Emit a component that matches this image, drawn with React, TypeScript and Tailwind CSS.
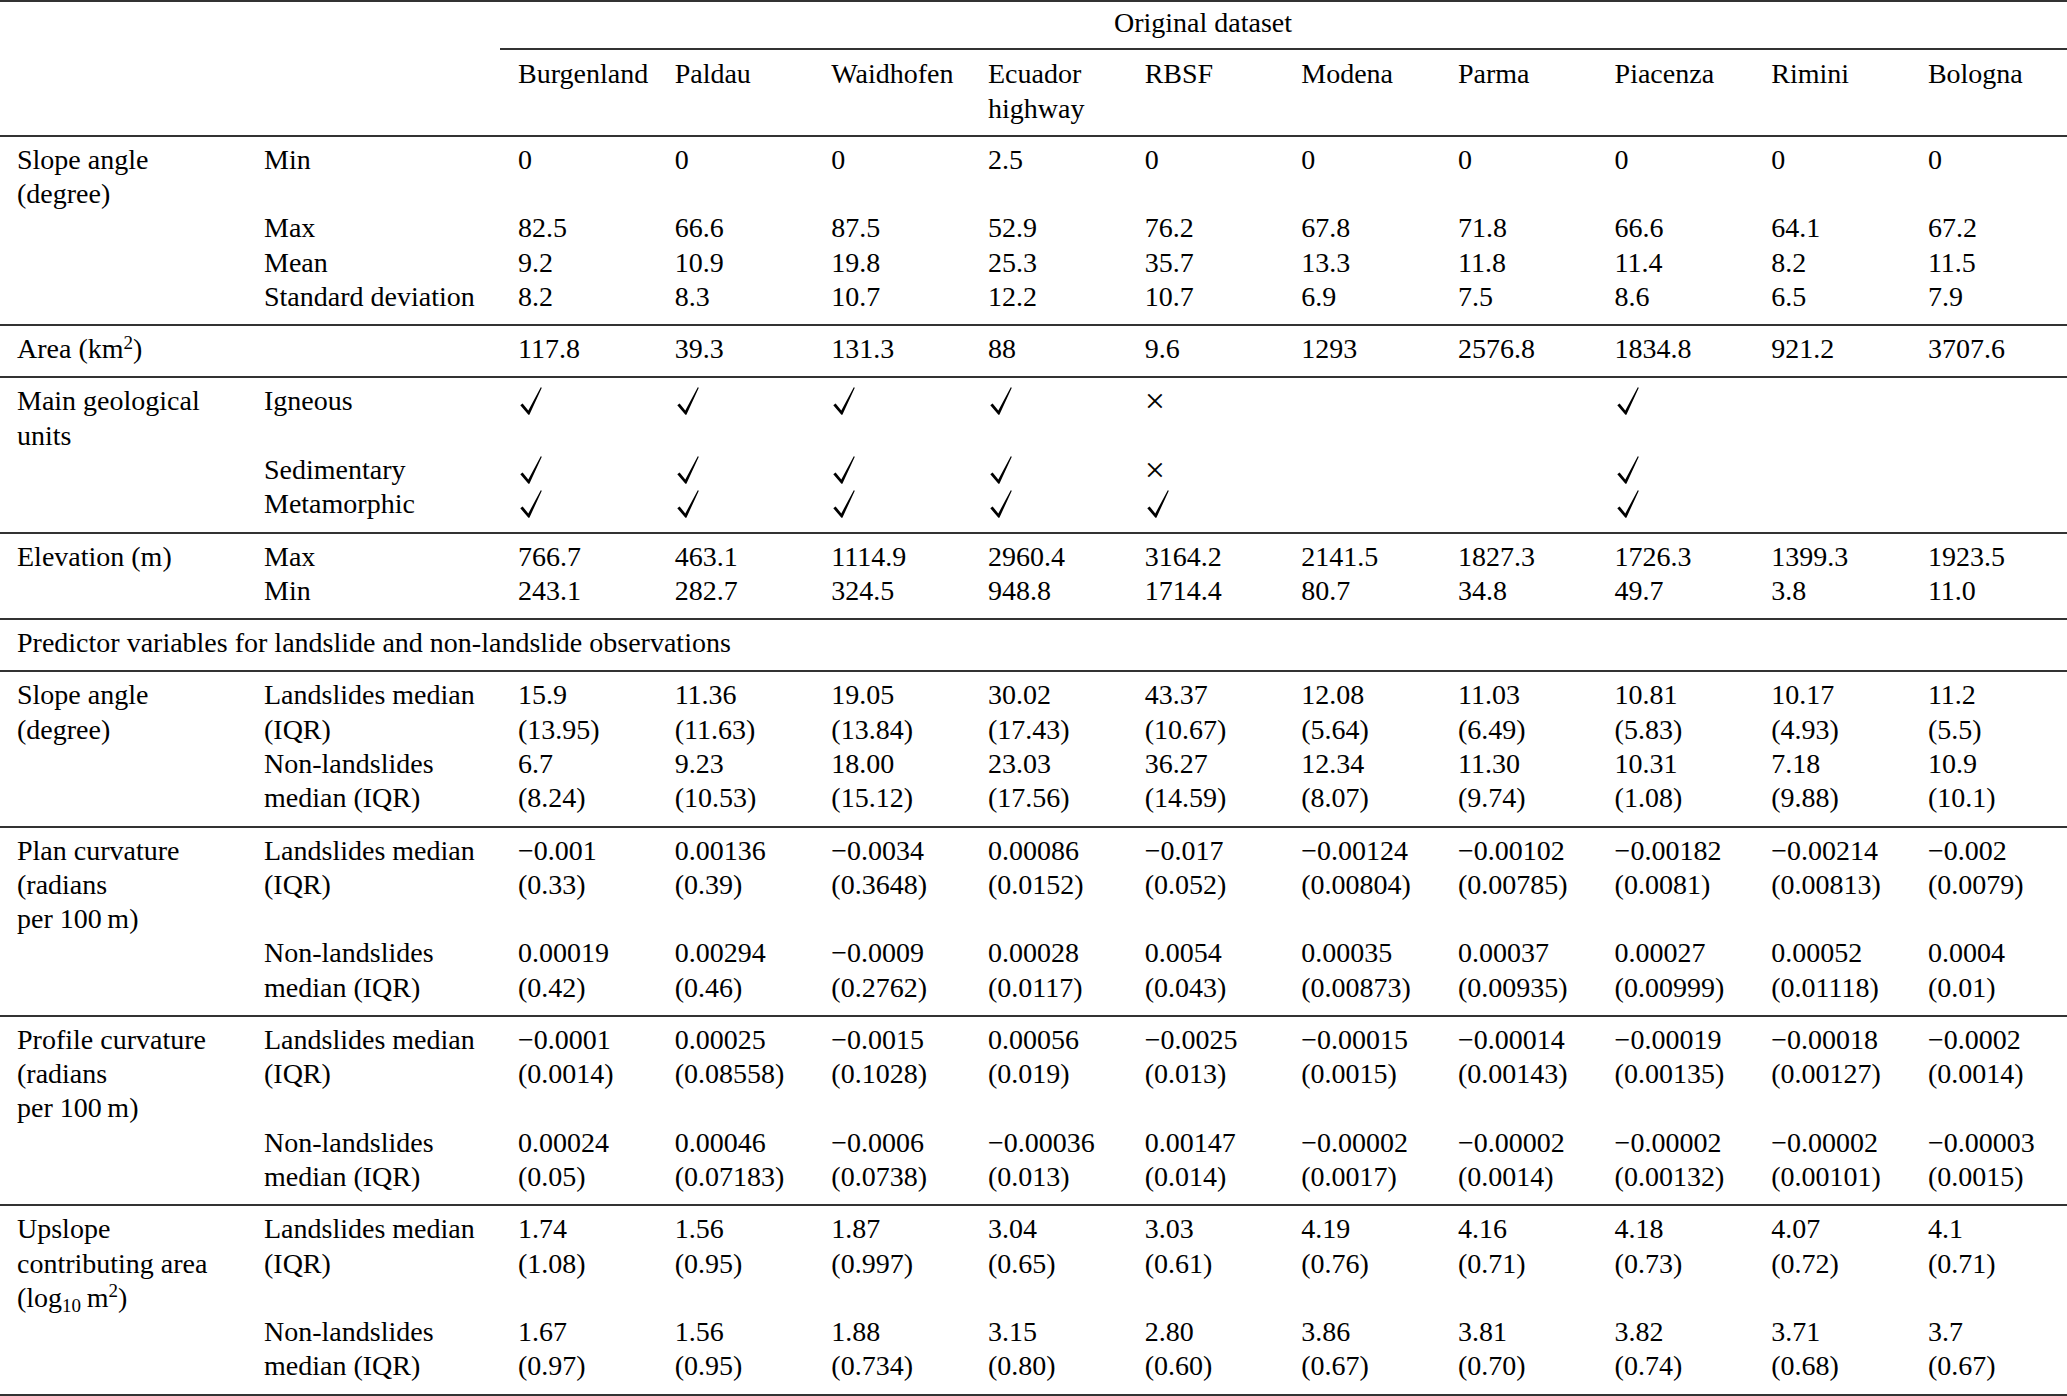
import type { ReactNode } from 'react'

//one grid for every row so the columns line up down the table
const grid = 'grid grid-cols-[247px_254px_repeat(9,156.67px)_1fr] pl-[17px] whitespace-pre-line'

const sites = ['Burgenland', 'Paldau', 'Waidhofen', 'Ecuador\nhighway', 'RBSF', 'Modena', 'Parma', 'Piacenza', 'Rimini', 'Bologna']

type RowData = { label?: ReactNode; sub?: ReactNode; vals: ReactNode[] }

//tex style check mark, short heavy hook then a long thin rise
function Check() {
  return (
    <svg width="22" height="28" viewBox="0 0 22 28" className="ml-[2px] mt-[3px] block" aria-label="√">
      <path d="M0.3 18.2 L2.6 16.4 L8.3 23.4 L20.8 0.2 L21.8 0.7 L9.4 27.8 L8.4 27.8 Z" fill="#000" />
    </svg>
  )
}

const Y = <Check />
const N = <div className="h-[34.25px] text-[36px] leading-[34.25px]">×</div>

type Block = { rows: RowData[] }

const top: Block[] = [
  {
    rows: [
      { label: 'Slope angle\n(degree)', sub: 'Min', vals: ['0', '0', '0', '2.5', '0', '0', '0', '0', '0', '0'] },
      { sub: 'Max', vals: ['82.5', '66.6', '87.5', '52.9', '76.2', '67.8', '71.8', '66.6', '64.1', '67.2'] },
      { sub: 'Mean', vals: ['9.2', '10.9', '19.8', '25.3', '35.7', '13.3', '11.8', '11.4', '8.2', '11.5'] },
      { sub: 'Standard deviation', vals: ['8.2', '8.3', '10.7', '12.2', '10.7', '6.9', '7.5', '8.6', '6.5', '7.9'] },
    ],
  },
  {
    rows: [
      {
        label: (
          <>
            Area (km<sup className="text-[19px]">2</sup>)
          </>
        ),
        vals: ['117.8', '39.3', '131.3', '88', '9.6', '1293', '2576.8', '1834.8', '921.2', '3707.6'],
      },
    ],
  },
  {
    rows: [
      { label: 'Main geological\nunits', sub: 'Igneous', vals: [Y, Y, Y, Y, N, '', '', Y, '', ''] },
      { sub: 'Sedimentary', vals: [Y, Y, Y, Y, N, '', '', Y, '', ''] },
      { sub: 'Metamorphic', vals: [Y, Y, Y, Y, Y, '', '', Y, '', ''] },
    ],
  },
  {
    rows: [
      { label: 'Elevation (m)', sub: 'Max', vals: ['766.7', '463.1', '1114.9', '2960.4', '3164.2', '2141.5', '1827.3', '1726.3', '1399.3', '1923.5'] },
      { sub: 'Min', vals: ['243.1', '282.7', '324.5', '948.8', '1714.4', '80.7', '34.8', '49.7', '3.8', '11.0'] },
    ],
  },
]

const ls = 'Landslides median\n(IQR)'
const nls = 'Non-landslides\nmedian (IQR)'

//pairs of median and IQR
function pairs(list: string) {
  return list.split(';').map((p) => {
    const [m, q] = p.trim().split(' ')
    return `${m}\n${q}`
  })
}

const bottom: Block[] = [
  {
    rows: [
      {
        label: 'Slope angle\n(degree)',
        sub: ls,
        vals: pairs('15.9 (13.95); 11.36 (11.63); 19.05 (13.84); 30.02 (17.43); 43.37 (10.67); 12.08 (5.64); 11.03 (6.49); 10.81 (5.83); 10.17 (4.93); 11.2 (5.5)'),
      },
      {
        sub: nls,
        vals: pairs('6.7 (8.24); 9.23 (10.53); 18.00 (15.12); 23.03 (17.56); 36.27 (14.59); 12.34 (8.07); 11.30 (9.74); 10.31 (1.08); 7.18 (9.88); 10.9 (10.1)'),
      },
    ],
  },
  {
    rows: [
      {
        label: 'Plan curvature\n(radians\nper 100\u2009m)',
        sub: ls,
        vals: pairs('−0.001 (0.33); 0.00136 (0.39); −0.0034 (0.3648); 0.00086 (0.0152); −0.017 (0.052); −0.00124 (0.00804); −0.00102 (0.00785); −0.00182 (0.0081); −0.00214 (0.00813); −0.002 (0.0079)'),
      },
      {
        sub: nls,
        vals: pairs('0.00019 (0.42); 0.00294 (0.46); −0.0009 (0.2762); 0.00028 (0.0117); 0.0054 (0.043); 0.00035 (0.00873); 0.00037 (0.00935); 0.00027 (0.00999); 0.00052 (0.01118); 0.0004 (0.01)'),
      },
    ],
  },
  {
    rows: [
      {
        label: 'Profile curvature\n(radians\nper 100\u2009m)',
        sub: ls,
        vals: pairs('−0.0001 (0.0014); 0.00025 (0.08558); −0.0015 (0.1028); 0.00056 (0.019); −0.0025 (0.013); −0.00015 (0.0015); −0.00014 (0.00143); −0.00019 (0.00135); −0.00018 (0.00127); −0.0002 (0.0014)'),
      },
      {
        sub: nls,
        vals: pairs('0.00024 (0.05); 0.00046 (0.07183); −0.0006 (0.0738); −0.00036 (0.013); 0.00147 (0.014); −0.00002 (0.0017); −0.00002 (0.0014); −0.00002 (0.00132); −0.00002 (0.00101); −0.00003 (0.0015)'),
      },
    ],
  },
  {
    rows: [
      {
        label: (
          <>
            Upslope
            <br />
            contributing area
            <br />
            (log<sub className="text-[19px]">10</sub>
            {'\u2009'}m<sup className="text-[19px]">2</sup>)
          </>
        ),
        sub: ls,
        vals: pairs('1.74 (1.08); 1.56 (0.95); 1.87 (0.997); 3.04 (0.65); 3.03 (0.61); 4.19 (0.76); 4.16 (0.71); 4.18 (0.73); 4.07 (0.72); 4.1 (0.71)'),
      },
      {
        sub: nls,
        vals: pairs('1.67 (0.97); 1.56 (0.95); 1.88 (0.734); 3.15 (0.80); 2.80 (0.60); 3.86 (0.67); 3.81 (0.70); 3.82 (0.74); 3.71 (0.68); 3.7 (0.67)'),
      },
    ],
  },
]

function Row({ label, sub, vals }: RowData) {
  return (
    <div className={grid}>
      <div>{label}</div>
      <div>{sub}</div>
      {vals.map((v, i) => (
        <div key={i}>{v}</div>
      ))}
    </div>
  )
}

function Section({ block }: { block: Block }) {
  return (
    <section className="border-t-2 border-[#333] pt-[6px] pb-[10.1px]">
      {block.rows.map((r, i) => (
        <Row key={i} {...r} />
      ))}
    </section>
  )
}

export default function App() {
  return (
    <div className="min-h-[1396px] w-[2067px] bg-white font-['Liberation_Serif','Times_New_Roman',serif] text-[28px] leading-[34.25px] text-black">
      {/* column header block */}
      <header className="border-t-2 border-[#333]">
        <div className={`${grid} pt-[4px] pb-[8px]`}>
          <div className="col-span-2" />
          <div className="col-span-10 pl-[596px]">Original dataset</div>
        </div>
        <div className="ml-[500px] border-t-2 border-[#333]" />
        <div className={`${grid} pt-[7px] pb-[9px]`}>
          <div className="col-span-2" />
          {sites.map((s) => (
            <div key={s}>{s}</div>
          ))}
        </div>
      </header>

      {top.map((b, i) => (
        <Section key={i} block={b} />
      ))}

      <section className="border-t-2 border-[#333] pt-[6px] pb-[10.1px] pl-[17px]">
        Predictor variables for landslide and non-landslide observations
      </section>

      {bottom.map((b, i) => (
        <Section key={i} block={b} />
      ))}
      <div className="border-t-2 border-[#333]" />
    </div>
  )
}
